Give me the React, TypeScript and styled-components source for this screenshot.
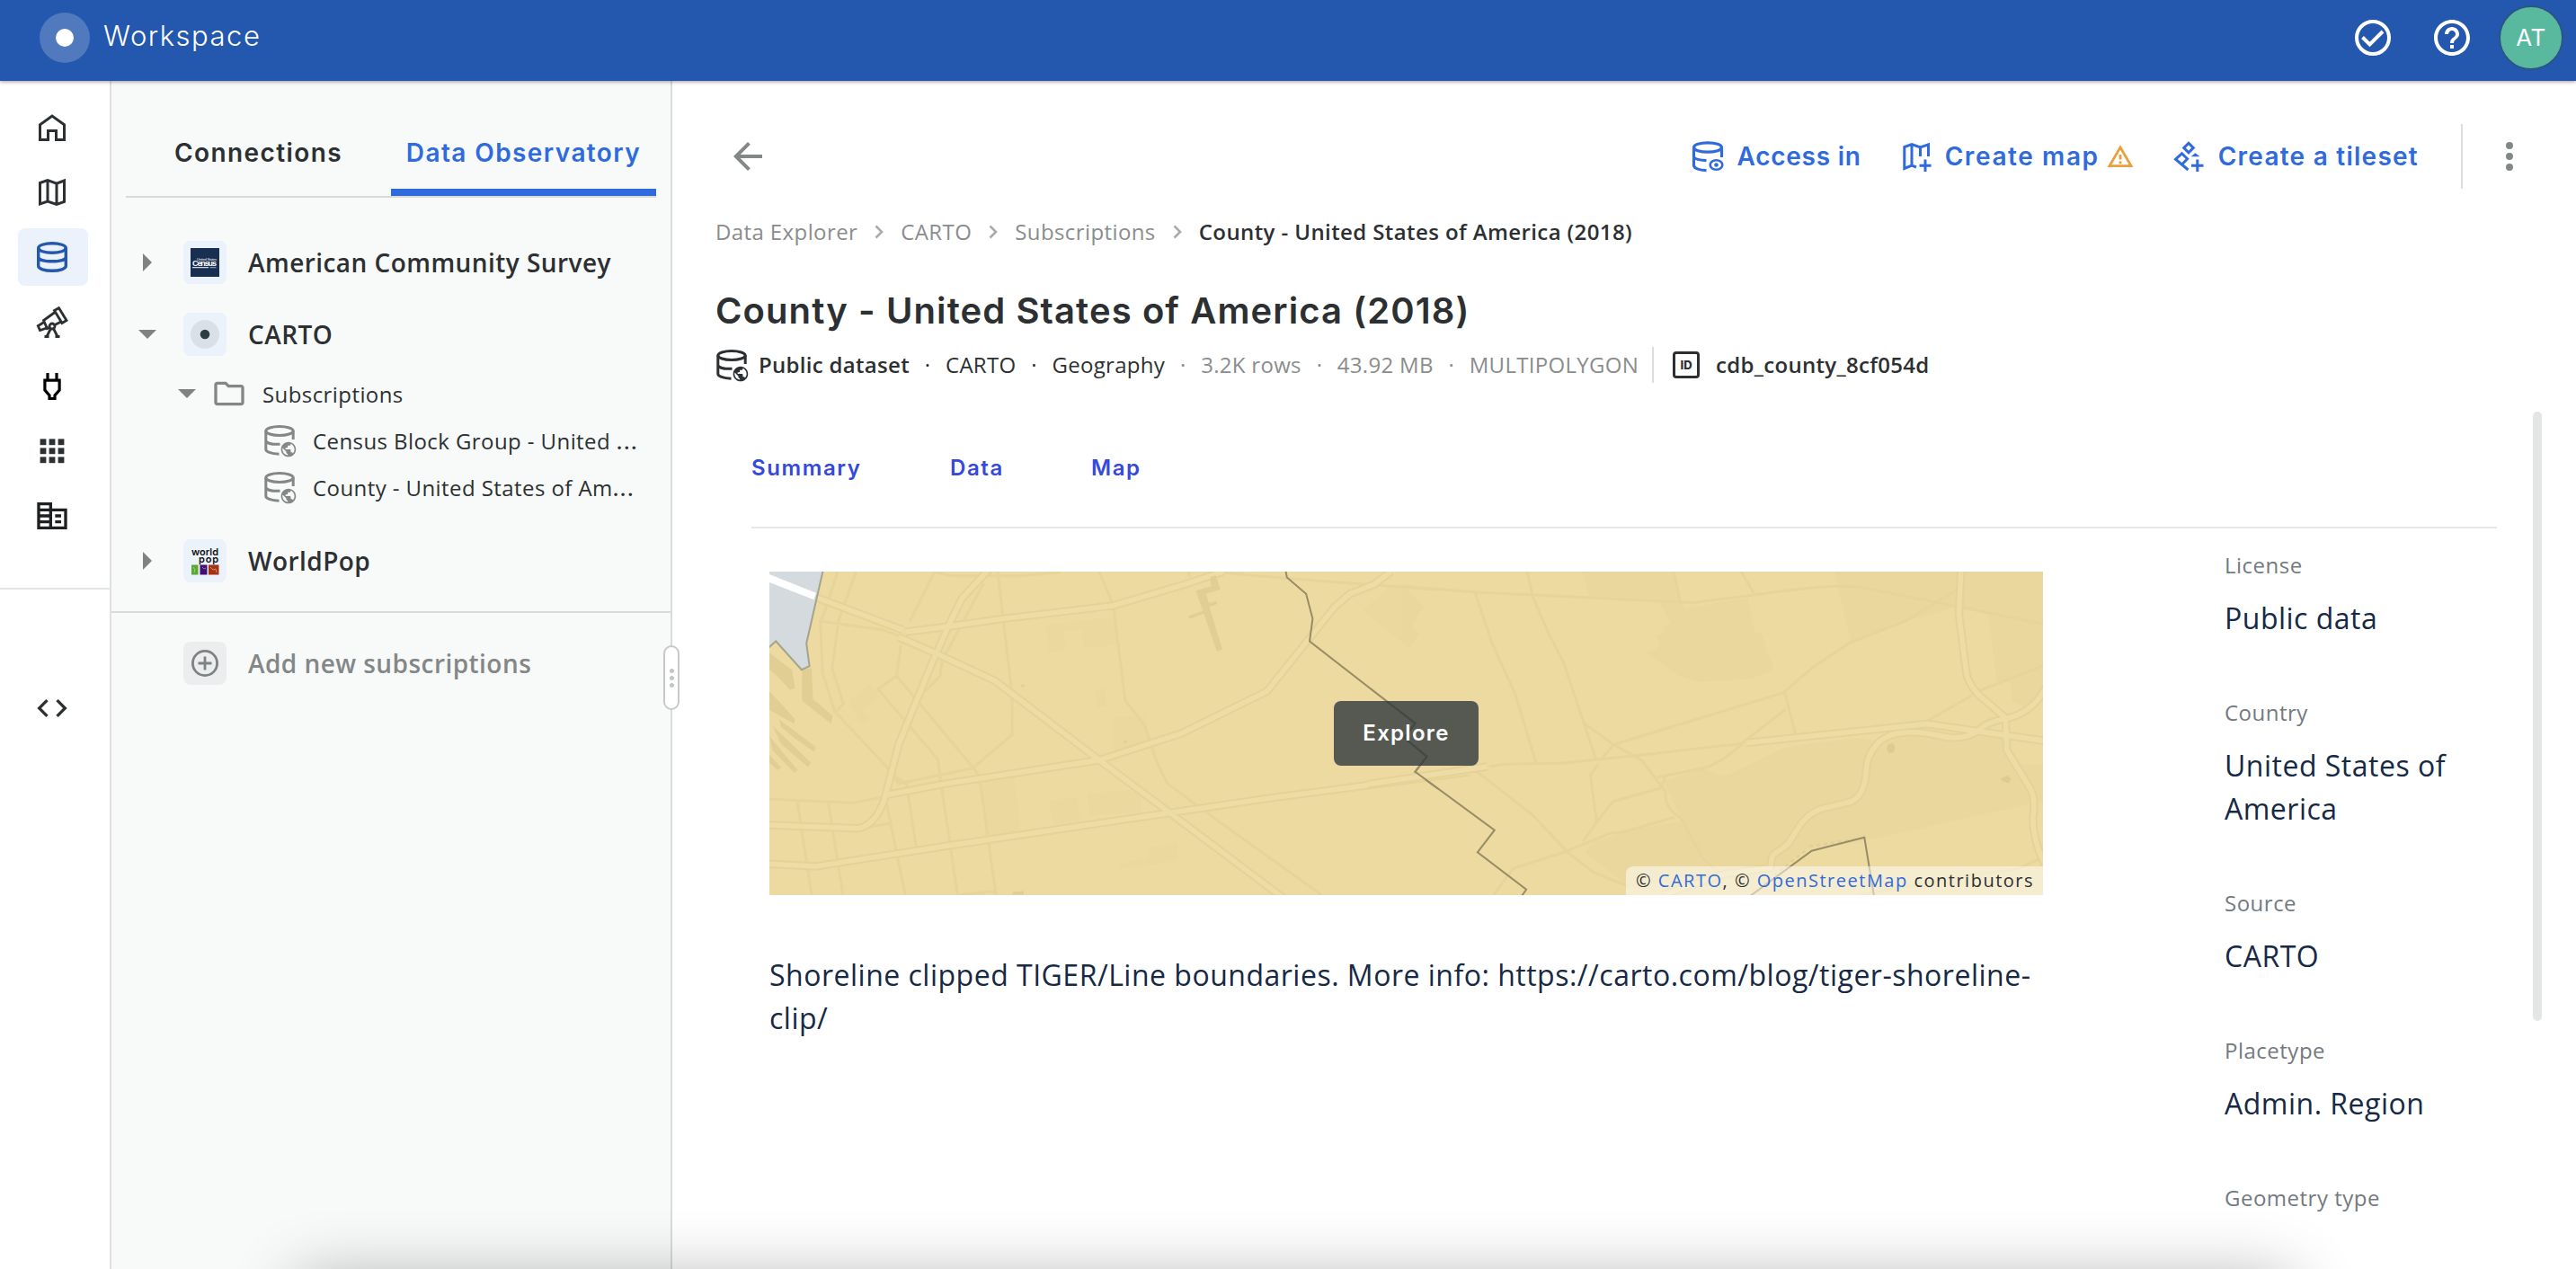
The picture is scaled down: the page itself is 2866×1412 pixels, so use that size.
import React from 'react';
import styled, { createGlobalStyle } from 'styled-components';

const sans = `'Open Sans', 'Noto Sans', sans-serif`;
const display = `Inter, 'Open Sans', sans-serif`;

const Global = createGlobalStyle`
  * { box-sizing: border-box; }
  body { margin: 0; background: #fff; overflow: hidden; font-family: ${sans}; color: #2c3032; }
  svg { display: block; flex: none; }
`;

const Page = styled.div`
  display: flex;
  flex-direction: column;
  width: 2866px;
  height: 1412px;
  position: relative;
  overflow: hidden;
`;

/* ---------- top bar ---------- */
const TopBar = styled.header`
  height: 90px;
  flex: none;
  background: #2358ae;
  display: flex;
  align-items: flex-start;
  padding: 6px 14px 0 44px;
  box-shadow: 0 1px 4px rgba(40, 30, 20, 0.45);
  z-index: 2;
`;
const Brand = styled.div`
  display: flex;
  align-items: center;
  height: 72px;
  flex: 1;
`;
const Logo = styled.div`
  width: 56px;
  height: 56px;
  border-radius: 50%;
  background: #5179be;
  display: flex;
  align-items: center;
  justify-content: center;
  &::after {
    content: '';
    width: 20px;
    height: 20px;
    border-radius: 50%;
    background: #fff;
  }
`;
const BrandName = styled.span`
  font: 300 31px/40px ${display};
  letter-spacing: 1.5px;
  color: #fff;
  margin: -4px 0 0 15px;
`;
const TopActions = styled.div`
  display: flex;
  align-items: center;
  height: 72px;
  gap: 40px;
  color: #fff;
`;
const Avatar = styled.div`
  width: 72px;
  height: 72px;
  margin-left: -12px;
  border-radius: 50%;
  border: 2px solid #2c5487;
  background: #59b99e;
  color: #fff;
  font: 400 26px/68px ${display};
  letter-spacing: 0.5px;
  text-align: center;
`;

/* ---------- rail ---------- */
const Body = styled.div`
  display: flex;
  flex: 1;
  min-height: 0;
`;
const Rail = styled.nav`
  width: 124px;
  flex: none;
  border-right: 2px solid #dfe0e0;
  padding-top: 20px;
  display: flex;
  flex-direction: column;
  gap: 8px;
`;
const RailItem = styled.div<{ $active?: boolean; $color?: string }>`
  width: 78px;
  height: 64px;
  margin-left: 20px;
  padding-right: 2px;
  border-radius: 8px;
  display: flex;
  align-items: center;
  justify-content: center;
  background: ${p => (p.$active ? '#ebf2fb' : 'transparent')};
  color: ${p => p.$color ?? (p.$active ? '#2358ae' : '#2c3032')};
`;
const RailDivider = styled.div`
  height: 2px;
  background: #e3e4e4;
  margin: 40px 0 92px;
`;

/* ---------- sidebar ---------- */
const Sidebar = styled.aside`
  width: 624px;
  flex: none;
  position: relative;
  background: #f8faf9;
  border-right: 2px solid #d9dada;
`;
const SideTabs = styled.div`
  display: flex;
  width: 590px;
  height: 130px;
  margin-left: 16px;
  border-bottom: 2px solid #d9dbdb;
`;
const SideTab = styled.div<{ $active?: boolean }>`
  flex: 1;
  padding-top: 60px;
  text-align: center;
  white-space: nowrap;
  font: 600 28px/40px ${display};
  letter-spacing: 1.4px;
  color: ${p => (p.$active ? '#2f6bdc' : '#2c3032')};
  border-bottom: 8px solid ${p => (p.$active ? '#2f6bdc' : 'transparent')};
`;
const Tree = styled.div`
  padding-top: 32px;
`;
const Provider = styled.div<{ $gap?: number }>`
  height: 80px;
  margin-top: ${p => p.$gap ?? 0}px;
  display: flex;
  align-items: center;
  padding-left: 25px;
`;
const Caret = styled.div`
  width: 30px;
  margin-right: 25px;
  display: flex;
  justify-content: center;
  color: #7f8282;
`;
const ProviderBadge = styled.div<{ $muted?: boolean }>`
  width: 48px;
  height: 48px;
  border-radius: 8px;
  background: ${p => (p.$muted ? '#ecedef' : '#ebf2fb')};
  color: #7f8282;
  display: flex;
  align-items: center;
  justify-content: center;
`;
const ProviderName = styled.span<{ $muted?: boolean }>`
  margin-left: 24px;
  font: 600 28px/40px ${sans};
  letter-spacing: 0.45px;
  white-space: nowrap;
  color: ${p => (p.$muted ? '#848787' : '#2c3032')};
`;
const Folder = styled.div`
  height: 52px;
  display: flex;
  align-items: center;
  padding-left: 69px;
`;
const FolderIcon = styled.div`
  margin: 0 17px 0 -13px;
  color: #848787;
`;
const Dataset = styled.div`
  height: 52px;
  display: flex;
  align-items: center;
  padding-left: 169px;
  gap: 19px;
  color: #848787;
`;
const TreeText = styled.span`
  font: 400 24px/36px ${sans};
  letter-spacing: 0.42px;
  color: #2c3032;
  white-space: nowrap;
  padding-top: 2px;
`;
const Dots = styled.span`
  letter-spacing: 1.6px;
  font-weight: 600;
`;
const SideDivider = styled.div`
  height: 2px;
  background: #d9dbdb;
  margin: 16px 0;
`;
const Handle = styled.div`
  position: absolute;
  left: 614px;
  top: 628px;
  width: 18px;
  height: 72px;
  border: 2px solid #c8caca;
  border-radius: 9px;
  background: #fff;
  display: flex;
  flex-direction: column;
  align-items: center;
  justify-content: center;
  gap: 3px;
  z-index: 1;
`;
const HandleDot = styled.i`
  width: 5px;
  height: 5px;
  border-radius: 50%;
  background: #c4c6c6;
`;

/* ---------- main ---------- */
const Main = styled.main`
  flex: 1;
  min-width: 0;
  position: relative;
  padding: 44px 88px 0 48px;
`;
const Toolbar = styled.div`
  height: 80px;
  margin-right: -66px;
  display: flex;
  align-items: center;
  color: #2f6bdc;
`;
const Back = styled.div`
  flex: 1;
  color: #848787;
  padding-left: 12px;
`;
const Action = styled.div<{ $gap: number; $ls: number; $space: number }>`
  display: flex;
  align-items: center;
  gap: ${p => p.$gap}px;
  margin-right: ${p => p.$space}px;
  font: 600 28px/40px ${display};
  letter-spacing: ${p => p.$ls}px;
  white-space: nowrap;
`;
const WarningSlot = styled.span`
  margin-left: -5px;
`;
const ToolDivider = styled.div`
  width: 2px;
  height: 72px;
  background: #dcdddd;
`;
const Kebab = styled.div`
  width: 104px;
  color: #848787;
  display: flex;
  justify-content: center;
`;
const Crumbs = styled.div`
  margin-top: 26px;
  height: 36px;
  display: flex;
  align-items: center;
  font: 400 24px/36px ${sans};
  letter-spacing: 0.4px;
  color: #8a8d8d;
  white-space: nowrap;
  svg { margin: 0 19px; }
`;
const CurrentCrumb = styled.span`
  font-weight: 600;
  color: #2c3032;
`;
const Title = styled.h1`
  margin: 42px 0 0;
  height: 56px;
  font: 600 40px/56px ${display};
  letter-spacing: 1.1px;
  white-space: nowrap;
`;
const Meta = styled.div`
  margin-top: 12px;
  height: 40px;
  display: flex;
  align-items: center;
  font: 400 24px/40px ${sans};
  white-space: nowrap;
`;
const MetaItem = styled.span<{ $muted?: boolean; $strong?: boolean; $after?: number }>`
  margin-left: ${p => p.$after ?? 0}px;
  color: ${p => (p.$muted ? '#8a8d8d' : '#2c3032')};
  font-weight: ${p => (p.$strong ? 600 : 400)};
  letter-spacing: 0.3px;
`;
const MetaDot = styled.span<{ $muted?: boolean }>`
  width: 40px;
  text-align: center;
  color: ${p => (p.$muted ? '#8a8d8d' : '#2c3032')};
`;
const MetaDivider = styled.div`
  width: 2px;
  height: 40px;
  margin: 0 21px 0 15px;
  background: #dcdddd;
`;
const IdBadge = styled.div`
  width: 30px;
  height: 30px;
  margin-right: 18px;
  border: 3px solid #2c3032;
  border-radius: 4px;
  font: 800 13px/24px ${display};
  letter-spacing: 0;
  text-align: center;
`;
const Tabs = styled.div`
  height: 132px;
  margin: 30px 0 0 40px;
  border-bottom: 2px solid #e6e6ee;
  display: flex;
  align-items: center;
`;
const Tab = styled.div<{ $w: number }>`
  width: ${p => p.$w}px;
  font: 600 24px/36px ${display};
  letter-spacing: 1.6px;
  color: #3548e0;
`;
const Content = styled.div`
  display: flex;
  padding-left: 60px;
`;
const Overview = styled.div`
  width: 1417px;
  padding-top: 48px;
`;
const MapFrame = styled.div`
  position: relative;
  height: 360px;
  overflow: hidden;
`;
const Explore = styled.button`
  position: absolute;
  left: 628px;
  top: 144px;
  width: 161px;
  height: 72px;
  border: 0;
  border-radius: 8px;
  background: rgba(44, 53, 60, 0.78);
  color: #fff;
  font: 600 24px/36px ${display};
  letter-spacing: 1.3px;
  padding: 0;
`;
const Attribution = styled.div`
  position: absolute;
  right: 0;
  bottom: 0;
  width: 464px;
  height: 32px;
  padding-left: 11px;
  background: rgba(255, 255, 255, 0.5);
  border-top-left-radius: 8px;
  font: 400 20px/31px ${sans};
  letter-spacing: 1.5px;
  white-space: nowrap;
  a { color: #2f6bdc; }
`;
const Description = styled.p`
  margin: 65px 0 0;
  font: 400 32px/48px ${sans};
  letter-spacing: 0.5px;
  color: #162945;
`;
const Facts = styled.dl`
  margin: 0 0 0 202px;
  width: 300px;
  padding-top: 23px;
`;
const FactLabel = styled.dt`
  font: 400 24px/36px ${sans};
  letter-spacing: 0.5px;
  color: #747a80;
`;
const FactValue = styled.dd`
  margin: 17px 0 63px;
  font: 400 32px/48px ${sans};
  letter-spacing: 0.5px;
  color: #162945;
`;
const ScrollThumb = styled.div`
  position: absolute;
  left: 2070px;
  top: 368px;
  width: 10px;
  height: 678px;
  border-radius: 5px;
  background: #e4e6e5;
`;
const DockShadow = styled.div`
  position: absolute;
  left: 330px;
  right: 316px;
  top: 1422px;
  height: 200px;
  box-shadow: 0 0 72px rgba(0, 0, 0, 0.3);
  z-index: 5;
`;

/* ---------- icons ---------- */
type GlyphProps = { d: string; size: number };
const Glyph = ({ d, size }: GlyphProps) => (
  <svg width={size} height={size} viewBox="0 0 24 24" fill="currentColor" fillRule="evenodd">
    <path d={d} />
  </svg>
);
const Line = ({ children, w = 3, size = 36 }: { children: React.ReactNode; w?: number; size?: number }) => (
  <svg width={size} height={size} viewBox={`0 0 ${size} ${size}`} fill="none" stroke="currentColor" strokeWidth={w}>
    {children}
  </svg>
);
const arrowBack = 'M20 11H7.83l5.59-5.59L12 4l-8 8 8 8 1.41-1.41L7.83 13H20v-2z';
const help =
  'M11 18h2v-2h-2v2zm1-16C6.48 2 2 6.48 2 12s4.48 10 10 10 10-4.48 10-10S17.52 2 12 2zm0 18c-4.41 0-8-3.59-8-8s3.59-8 8-8 8 3.59 8 8-3.59 8-8 8zm0-14c-2.21 0-4 1.79-4 4h2c0-1.1.9-2 2-2s2 .9 2 2c0 2-3 1.75-3 5h2c0-2.25 3-2.5 3-5 0-2.21-1.79-4-4-4z';
const building =
  'M12 7V3H2v18h20V7H12zM10 19H4v-2h6v2zm0-4H4v-2h6v2zm0-4H4V9h6v2zm0-4H4V5h6v2zm10 12h-8V9h8v10zm-2-8h-4v2h4v-2zm0 4h-4v2h4v-2z';
const code = 'M9.4 16.6L4.8 12l4.6-4.6L8 6l-6 6 6 6 1.4-1.4zm5.2 0l4.6-4.6-4.6-4.6L16 6l6 6-6 6-1.4-1.4z';
const folder =
  'M9.17 6l2 2H20v10H4V6h5.17M10 4H4c-1.1 0-1.99.9-1.99 2L2 18c0 1.1.9 2 2 2h16c1.1 0 2-.9 2-2V8c0-1.1-.9-2-2-2h-8l-2-2z';
const globe =
  'M12 2C6.48 2 2 6.48 2 12s4.48 10 10 10 10-4.48 10-10S17.52 2 12 2zm-1 17.93c-3.95-.49-7-3.85-7-7.93 0-.62.08-1.21.21-1.79L9 15v1c0 1.1.9 2 2 2v1.93zm6.9-2.54c-.26-.81-1-1.39-1.9-1.39h-1v-3c0-.55-.45-1-1-1H8v-2h2c.55 0 1-.45 1-1V7h2c1.1 0 2-.9 2-2v-.41c2.93 1.19 5 4.06 5 7.41 0 2.08-.8 3.97-2.1 5.39z';

const Home = () => (
  <Line><path d="M4.5 31.5V14.8L18 5l13.500 9.800V31.500H22.500V21.500H13.500V31.500z" /></Line>
);
const MapIcon = () => (
  <Line><path d="M4.500 7.500L13 4.700 23 8.200 31.500 5V28.500L23 31.500 13 28 4.500 31zM13 4.700V28M23 8.200V31.500" /></Line>
);
const Database = () => (
  <Line w={3.4}>
    <ellipse cx="18" cy="8" rx="15.300" ry="5.300" />
    <path d="M2.700 8V28C2.700 31 9.500 33.300 18 33.300S33.300 31 33.300 28V8M2.700 18C2.700 21 9.500 22.800 18 22.800S33.300 21 33.300 18" />
  </Line>
);
const Telescope = () => (
  <Line w={2.8}>
    <path d="M20.500 5.500L25.500 2.700 34 16.500 29 19.500zM21 7.500L8.500 16.500 12.500 25.500 28 18M9 18.500L2.300 22.500 4.500 27.500 12 25" />
    <circle cx="18" cy="23" r="3" fill="#fff" />
    <path d="M16.500 25.500L12 34.500M19.500 25.500L24 34.500M9.500 34.500h5M21.500 34.500h5" />
  </Line>
);
const Plug = () => (
  <Line w={3.2}><path d="M13 3v8M23 3v8M9.900 11.200h16.200v11L21 27.800V31.500H15V27.800L9.900 22.200z" /></Line>
);
const Apps = () => (
  <svg width="36" height="36" fill="currentColor">
    {[0, 1, 2].map(r => [0, 1, 2].map(c => <rect key={`${r}${c}`} x={4.6 + c * 10} y={4.4 + r * 10} width="6.800" height="6.800" />))}
  </svg>
);
const DatasetIcon = () => (
  <svg width="36" height="36" viewBox="0 0 36 36" overflow="visible" fill="none" stroke="currentColor" strokeWidth="3">
    <ellipse cx="18" cy="7.500" rx="15.200" ry="5" />
    <path d="M2.800 7.500V28C2.800 30.500 8 33 17.500 33.300M2.800 18.500C3.500 20.800 9 22.700 18.500 22.300M33.200 7.500V17" />
    <path d={globe} transform="translate(18 18) scale(.83)" fill="currentColor" stroke="none" />
  </svg>
);
const AccessIcon = () => (
  <Line w={3.2}>
    <ellipse cx="18" cy="8" rx="15.500" ry="5.200" />
    <path d="M2.500 8V28C2.500 31 8 33.500 16.500 33.600M2.500 18.500C3.500 21 8 22.300 16.500 22.600M33.500 8V19" />
    <ellipse cx="27.500" cy="27.500" rx="6.800" ry="5.300" strokeWidth="2.600" />
    <circle cx="27.500" cy="27.500" r="2.300" fill="currentColor" stroke="none" />
  </Line>
);
const MapPlus = () => (
  <Line><path d="M17 30L12 28 3.800 31.500V7.500L12 4.500 21.500 8 30.500 4.800V18M12 4.500V28M21.500 8V18M27 21.500V35M20.500 28.200H33.500" /></Line>
);
const Warning = () => (
  <svg width="30" height="28" viewBox="0 0 30 28" fill="none" stroke="#e8a03c" strokeWidth="2.800">
    <path d="M15 4L27 24.600H3zM15 12v5.500M15 19.500v2.700" />
  </svg>
);
const TilesetIcon = () => (
  <Line>
    <path d="M18 3.300L23.300 8.600 18 13.900 12.700 8.600zM17.500 33L3.500 21.200 10.500 14.800 16.600 20.800 10.500 27M27.800 21.500V35M21 28.200H34.500" />
    <path d="M20.500 18.300L25.500 14.300 30.500 18.300z" fill="currentColor" stroke="none" />
  </Line>
);
const Chevron = () => (
  <svg width="10" height="16" fill="none" stroke="#a9abab" strokeWidth="2.600"><path d="M1.500 1.500L8 8 1.500 14.500" /></svg>
);
const CaretRight = () => (<svg width="10" height="20" fill="currentColor"><path d="M0 0L10 10 0 20z" /></svg>);
const CaretDown = () => (<svg width="20" height="10" fill="currentColor"><path d="M0 0H20L10 10z" /></svg>);

const CensusLogo = () => (
  <svg width="32" height="32" fontFamily="Liberation Sans" fill="#fff">
    <rect width="32" height="32" fill="#192f50" />
    <text>
      <tspan x="7" y="13.500" fontSize="4" textLength="22">United States</tspan>
      <tspan x="2" y="20" fontSize="9" fontWeight="700" textLength="27">Census</tspan>
    </text>
    <rect x="2" y="21.200" width="18" height="1" />
    <rect x="21.500" y="21.200" width="7" height="1" opacity=".6" />
  </svg>
);
const CartoLogo = () => (
  <svg width="32" height="32"><circle cx="16" cy="16" r="16" fill="#dae0e7" /><circle cx="16" cy="16" r="5.300" fill="#2e3c43" /></svg>
);
const WorldPopLogo = () => (
  <svg width="32" height="32" fontFamily="Inter" fontWeight="600" fontSize="11" fill="#111">
    <text>
      <tspan x="1" y="9.500" textLength="30">world</tspan>
      <tspan x="9" y="17.500" textLength="22">pop</tspan>
    </text>
    <rect x="1" y="20.500" width="7.500" height="11" fill="#5aa832" />
    <rect x="10.500" y="20.500" width="8" height="11" fill="#43106f" />
    <rect x="20" y="20.500" width="11.500" height="11" fill="#a33312" />
    <path d="M3 23l2 3-1 3M13 23l2 2 2-1M22 23l3 3 3-1 1 4" stroke="#fff" strokeWidth=".6" opacity=".7" fill="none" />
  </svg>
);

/* ---------- map drawing ---------- */
const minorWest =
  'M190 453L158 590 150 615 155 780 183 905 300 1080M232 453L192 610 177 765 203 880 186 905M412 453L355 615M335 690L325 790 282 832 420 1060 428 1150M325 790L500 1085 515 1115M557 453L590 850V980L500 1088M790 453L822 560 850 870 895 950 920 1060 945 1135 1020 1215 1300 1497M415 456L455 467H610L700 455M995 453L998 470M500 1088L425 1110 330 1138 297 1075M33 1188L225 1200 300 1180M97 1195L130 1497M168 1200L202 1497M315 1110L348 1140 370 1345M300 1190L345 1497M428 1150L465 1497M515 1115L553 1497M250 1280L315 1267M470 1497L553 1485M1070 456L1220 475 1568 512M525 490L430 740 425 790 390 840M150 613L290 640 340 665';
const majorWest = [
  'M537 445L475 540 445 625 400 770 330 1010 297 1190Q275 1275 235 1283L33 1272',
  'M345 648L430 633 570 605 822 563 985 495 1075 453',
  'M138 535L340 642M330 665L420 720 550 805 790 1062 950 1230 1215 1510',
  'M300 1175L430 1140 790 1062 980 975 1175 840 1330 568 1365 525 1420 495 1460 453',
  'M33 1397L140 1405 450 1337 1180 1185 1640 1100',
];
const minorEast =
  'M0 500L170 520 670 553 905 510Q1000 495 1050 503L1220 550 1475 623M287 453L300 535 335 650 370 745 445 1060M168 523L208 690 260 850 307 1070M623 453L638 548M778 453L808 525M200 1083L235 1075 365 1072 550 1045 780 1008 880 898M1275 510L1160 610 1025 685 945 760 878 840 903 980M878 843L485 1012 460 1055M420 945L485 1012 550 1063 605 1165Q600 1215 640 1250L690 1380 740 1440M780 1010Q730 1075 690 1088L585 1118M600 1150L485 1195 445 1265 415 1325M450 1075L432 1110 447 1267M170 1098L300 1240 380 1360 440 1425 520 1470M625 1247L500 1297H480L375 1358 255 1412 210 1497M1200 940L1330 835 1475 755M1480 1370L1410 1415 1320 1430 1050 1497M605 1110L595 1150';
const majorEast = [
  'M-80 1140L195 1083',
  'M790 1006L1205 945 1475 1000',
  'M1283 445L1278 590 1295 780Q1300 820 1330 860L1385 925 1388 1030 1440 1150Q1455 1180 1448 1250 1448 1320 1475 1400',
  'M1480 820Q1450 910 1385 928 1340 940 1325 965 1290 1000 1240 985 1130 950 1090 1010 1065 1050 1065 1100 1060 1190 1020 1200L960 1220Q925 1240 905 1290L885 1335 850 1370 845 1410 740 1430 600 1497',
];

const Roads = ({ minor, major }: { minor: string; major: string[] }) => (
  <g fill="none" strokeLinejoin="round">
    <path d={minor} stroke="#e6d499" strokeWidth="3" vectorEffect="non-scaling-stroke" />
    {major.map(d => <path key={d} d={d} stroke="#e4d297" strokeWidth="9.500" vectorEffect="non-scaling-stroke" />)}
    {major.map(d => <path key={d} d={d} stroke="#eedca5" strokeWidth="5.500" vectorEffect="non-scaling-stroke" />)}
  </g>
);

const CountyMap = () => (
  <svg width="1417" height="360" viewBox="0 0 1417 360">
    <rect width="1417" height="360" fill="#ecdaa0" />
    <g transform="translate(-16 -156) scale(.4847 .3444)">
      <path
        fill="#ead89e"
        d="M668 625L825 600 833 690 755 700 750 640 710 645 712 710 675 715zM780 835L800 830 808 885 785 892zM820 925L895 920 905 1025 825 1035zM675 1192L740 1183 745 1260 685 1275zM762 1170L885 1155 888 1230 770 1240zM905 1345L970 1330V1385L840 1415 838 1395 905 1378zM520 1120L595 1115 610 1285 535 1310zM215 870L265 815 285 860 245 900 262 930 245 950zM1395 580L1460 495 1495 505 1535 565 1505 630 1525 655 1502 700z"
      />
      <Roads minor={minorWest} major={majorWest} />
      <path
        fill="#e0ce93"
        d="M1045 470L1058 465 1068 510 1035 525 1042 555 1060 548V558L1043 568 1073 705 1060 710 1030 588 998 606 995 596 1028 580 1012 515 1047 500zM33 715L55 740 85 770 92 830 80 835 50 790 33 770zM108 770L130 765 133 865 178 918 175 945 108 870zM33 840L60 880 92 930 90 945 33 900zM55 930L140 1020 135 1035 90 990 60 955zM40 950L128 1070 122 1085 60 1010zM33 985L98 1095 90 1103 40 1030zM33 1045L60 1085 52 1095 33 1070zM592 1488L617 1485V1497H590zM610 820l8-3v8h-7zM846 1000l7-2v9h-7z"
      />
      <path d="M30 450H156L118 685 125 758 107 770 48 678 30 700z" fill="#d4dadd" />
      <path d="M156 450L118 685 125 758 107 770 48 678 30 700" fill="none" stroke="#a5a48f" strokeWidth="2" vectorEffect="non-scaling-stroke" />
      <path d="M33 462L140 522 135 544 33 488z" fill="#fff" />
      <path d="M1218 450L1221 472 1265 525 1280 605 1273 678 1515 943 1490 990 1542 1050 1515 1100 1568 1155" fill="none" stroke="#988c67" strokeWidth="2" vectorEffect="non-scaling-stroke" />
    </g>
    <g transform="translate(704 -156) scale(.4847 .3444)">
      <path
        fill="#ead79d"
        d="M0 500L50 565 20 630 38 655 15 700 0 680zM412 453L625 455 635 545 430 530zM590 550L640 550 650 572 793 537 810 650 825 655 853 773 795 800 680 810 635 790 562 717 592 695 585 660 602 650 597 630 617 622zM992 453H1480V850L1440 900 1400 870 1395 810 1365 808 1345 590 1270 565 1240 580 1160 612 1030 680zM600 1130L690 1088 740 1115 880 1020 1040 990 1090 1000 1190 960 1290 990 1385 980 1400 1070 1480 1080V1190L1040 1330 930 1350 860 1420 740 1430 690 1380 640 1250zM420 1360L440 1325 500 1300 590 1270 640 1260 740 1440 520 1470z"
      />
      <Roads minor={minorEast} major={majorEast} />
      <path fill="#ddcb90" d="M1115 1012l10-5 7 12-4 18-10 3-6-14zM1372 1122l18-10 8 12-6 12-12-4z" />
      <path d="M935 1340L1055 1315M925 1355L830 1460" fill="none" stroke="#e2cf90" strokeWidth="2.500" strokeDasharray="4 4" vectorEffect="non-scaling-stroke" />
      <path d="M-5 905L30 943 5 990 57 1050 30 1100 212 1288 173 1360 285 1480 275 1500M800 1500L940 1355 1061 1312 1083 1500" fill="none" stroke="#988c67" strokeWidth="2" vectorEffect="non-scaling-stroke" />
    </g>
  </svg>
);

const facts = [
  ['License', 'Public data'],
  ['Country', 'United States of America'],
  ['Source', 'CARTO'],
  ['Placetype', 'Admin. Region'],
  ['Geometry type', ''],
];

export default function App() {
  return (
    <Page>
      <Global />
      <TopBar>
        <Brand>
          <Logo />
          <BrandName>Workspace</BrandName>
        </Brand>
        <TopActions>
          <Line size={48} w={4}>
            <circle cx="24" cy="24" r="18" />
            <path d="M12.500 23.500L20.500 31.500 35 17" />
          </Line>
          <Glyph d={help} size={48} />
          <Avatar>AT</Avatar>
        </TopActions>
      </TopBar>
      <Body>
        <Rail>
          <RailItem><Home /></RailItem>
          <RailItem><MapIcon /></RailItem>
          <RailItem $active><Database /></RailItem>
          <RailItem><Telescope /></RailItem>
          <RailItem $color="#000"><Plug /></RailItem>
          <RailItem><Apps /></RailItem>
          <RailItem $color="#1f2021"><Glyph d={building} size={40} /></RailItem>
          <RailDivider />
          <RailItem><Glyph d={code} size={40} /></RailItem>
        </Rail>
        <Sidebar>
          <SideTabs>
            <SideTab>Connections</SideTab>
            <SideTab $active>Data Observatory</SideTab>
          </SideTabs>
          <Tree>
            <Provider>
              <Caret><CaretRight /></Caret>
              <ProviderBadge><CensusLogo /></ProviderBadge>
              <ProviderName>American Community Survey</ProviderName>
            </Provider>
            <Provider>
              <Caret><CaretDown /></Caret>
              <ProviderBadge><CartoLogo /></ProviderBadge>
              <ProviderName>CARTO</ProviderName>
            </Provider>
            <Folder>
              <Caret><CaretDown /></Caret>
              <FolderIcon><Glyph d={folder} size={40} /></FolderIcon>
              <TreeText>Subscriptions</TreeText>
            </Folder>
            <Dataset><DatasetIcon /><TreeText>Census Block Group - United <Dots>...</Dots></TreeText></Dataset>
            <Dataset><DatasetIcon /><TreeText>County - United States of Am<Dots>...</Dots></TreeText></Dataset>
            <Provider $gap={16}>
              <Caret><CaretRight /></Caret>
              <ProviderBadge><WorldPopLogo /></ProviderBadge>
              <ProviderName>WorldPop</ProviderName>
            </Provider>
          </Tree>
          <SideDivider />
          <Provider>
            <Caret />
            <ProviderBadge $muted>
              <Line w={2.8}><circle cx="18" cy="18" r="13.600" /><path d="M18 10.500V25.500M10.500 18H25.500" /></Line>
            </ProviderBadge>
            <ProviderName $muted>Add new subscriptions</ProviderName>
          </Provider>
          <Handle><HandleDot /><HandleDot /><HandleDot /></Handle>
        </Sidebar>
        <Main>
          <Toolbar>
            <Back><Glyph d={arrowBack} size={48} /></Back>
            <Action $gap={14} $ls={0.75} $space={44}><AccessIcon />Access in</Action>
            <Action $gap={13} $ls={1.6} $space={43}><MapPlus />Create map<WarningSlot><Warning /></WarningSlot></Action>
            <Action $gap={15} $ls={1.25} $space={47}><TilesetIcon />Create a tileset</Action>
            <ToolDivider />
            <Kebab>
              <svg width="8" height="34" fill="currentColor"><circle cx="4" cy="5" r="4" /><circle cx="4" cy="17" r="4" /><circle cx="4" cy="29" r="4" /></svg>
            </Kebab>
          </Toolbar>
          <Crumbs>
            <span>Data Explorer</span><Chevron />
            <span>CARTO</span><Chevron />
            <span>Subscriptions</span><Chevron />
            <CurrentCrumb>County - United States of America (2018)</CurrentCrumb>
          </Crumbs>
          <Title>County - United States of America (2018)</Title>
          <Meta>
            <DatasetIcon />
            <MetaItem $strong $after={12}>Public dataset</MetaItem>
            <MetaDot>·</MetaDot>
            <MetaItem>CARTO</MetaItem>
            <MetaDot>·</MetaDot>
            <MetaItem>Geography</MetaItem>
            <MetaDot $muted>·</MetaDot>
            <MetaItem $muted>3.2K rows</MetaItem>
            <MetaDot $muted>·</MetaDot>
            <MetaItem $muted>43.92 MB</MetaItem>
            <MetaDot $muted>·</MetaDot>
            <MetaItem $muted>MULTIPOLYGON</MetaItem>
            <MetaDivider />
            <IdBadge>ID</IdBadge>
            <MetaItem $strong>cdb_county_8cf054d</MetaItem>
          </Meta>
          <Tabs>
            <Tab $w={221}>Summary</Tab>
            <Tab $w={157}>Data</Tab>
            <Tab $w={100}>Map</Tab>
          </Tabs>
          <Content>
            <Overview>
              <MapFrame>
                <CountyMap />
                <Explore>Explore</Explore>
                <Attribution>© <a>CARTO</a>, © <a>OpenStreetMap</a> contributors</Attribution>
              </MapFrame>
              <Description>
                Shoreline clipped TIGER/Line boundaries. More info: https://carto.com/blog/tiger-shoreline-clip/
              </Description>
            </Overview>
            <Facts>
              {facts.map(([label, value]) => (
                <React.Fragment key={label}>
                  <FactLabel>{label}</FactLabel>
                  {value && <FactValue>{value}</FactValue>}
                </React.Fragment>
              ))}
            </Facts>
          </Content>
          <ScrollThumb />
        </Main>
      </Body>
      <DockShadow />
    </Page>
  );
}
